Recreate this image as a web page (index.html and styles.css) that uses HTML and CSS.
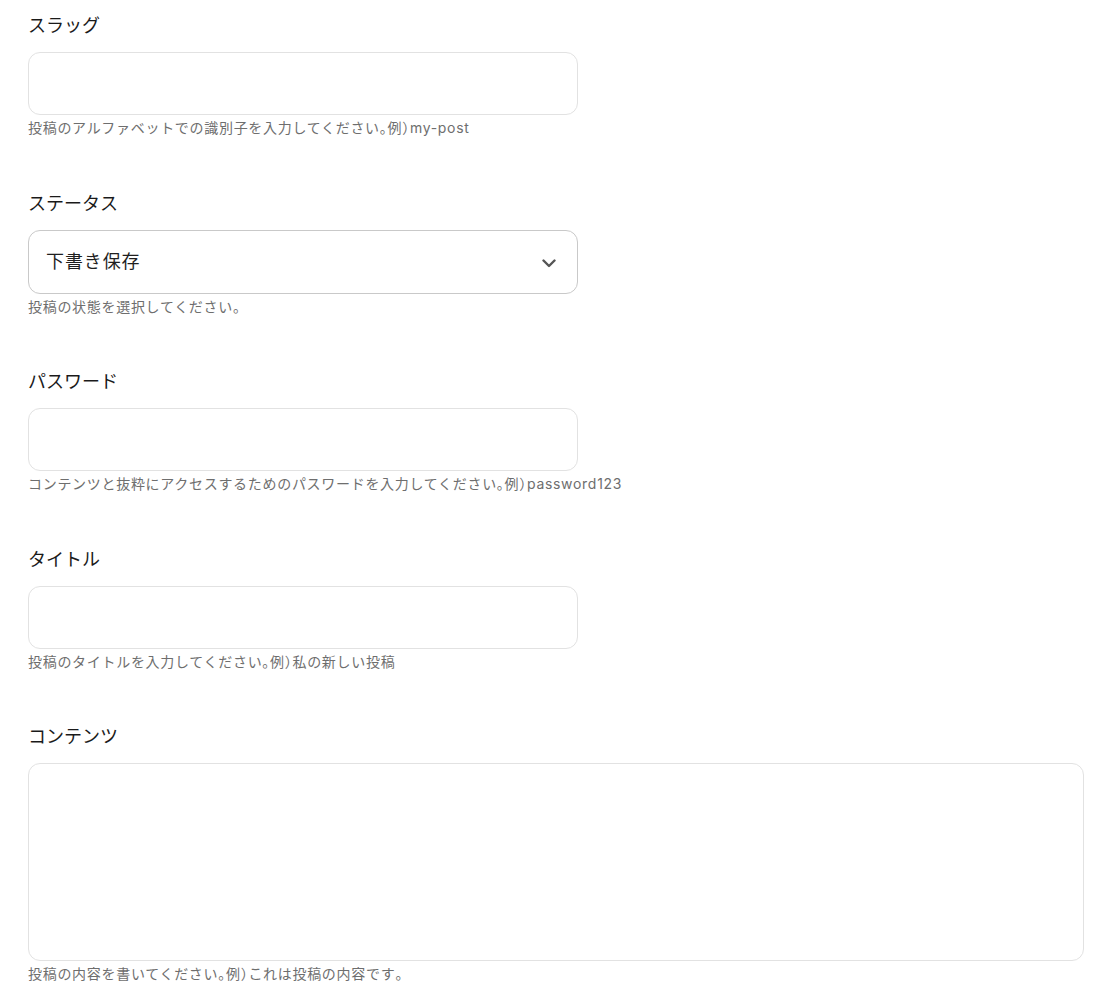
FILE: index.html
```html
<!DOCTYPE html>
<html lang="ja">
<head>
<meta charset="utf-8">
<link rel="stylesheet" href="styles.css">
</head>
<body>
<form class="form">
  <div class="field">
    <label class="label">スラッグ</label>
    <input class="input" type="text">
    <p class="help">投稿のアルファベットでの識別子を入力してください<span class="p">。</span>例<span class="p">）</span>my-post</p>
  </div>
  <div class="field">
    <label class="label">ステータス</label>
    <div class="select-wrap">
      <select class="select">
        <option>下書き保存</option>
      </select>
      <svg class="chevron" width="14" height="9" viewBox="0 0 14 9"><path d="M1.5 1.5 L7 7 L12.5 1.5" fill="none" stroke="#555" stroke-width="2.4" stroke-linecap="round" stroke-linejoin="round"/></svg>
    </div>
    <p class="help">投稿の状態を選択してください<span class="p">。</span></p>
  </div>
  <div class="field">
    <label class="label">パスワード</label>
    <input class="input" type="text">
    <p class="help">コンテンツと抜粋にアクセスするためのパスワードを入力してください<span class="p">。</span>例<span class="p">）</span>password123</p>
  </div>
  <div class="field">
    <label class="label">タイトル</label>
    <input class="input" type="text">
    <p class="help">投稿のタイトルを入力してください<span class="p">。</span>例<span class="p">）</span>私の新しい投稿</p>
  </div>
  <div class="field">
    <label class="label">コンテンツ</label>
    <textarea class="textarea"></textarea>
    <p class="help">投稿の内容を書いてください<span class="p">。</span>例<span class="p">）</span>これは投稿の内容です<span class="p">。</span></p>
  </div>
</form>
</body>
</html>
```

FILE: styles.css
```css
* { box-sizing: border-box; }
html, body { margin: 0; padding: 0; background: #fff; }
body {
  font-family: Inter, "Noto Sans CJK JP", sans-serif;
  color: #1f1f1f;
}
.form {
  padding: 12px 20px 0 28px;
  display: flex;
  flex-direction: column;
  gap: 51.5px;
}
.field {
  display: flex;
  flex-direction: column;
}
.label {
  font-size: 18px;
  line-height: 27px;
  font-weight: 400;
  margin-bottom: 13px;
  color: #1a1a1a;
}
.input, .select, .textarea {
  font-family: inherit;
  border: 1px solid #e2e2e2;
  border-radius: 12px;
  background: #fff;
  outline: none;
}
.input {
  width: 550px;
  height: 63px;
}
.select-wrap {
  position: relative;
  width: 550px;
}
.select {
  appearance: none;
  -webkit-appearance: none;
  width: 550px;
  height: 64px;
  border-color: #c9c9c9;
  padding: 0 17px;
  font-size: 18px;
  letter-spacing: 0.05em;
  color: #1f1f1f;
}
.chevron {
  position: absolute;
  right: 22px;
  top: 29px;
}
.textarea {
  width: 1056px;
  height: 198px;
  resize: none;
}
.help {
  margin: 2px 0 0;
  font-size: 14px;
  line-height: 21px;
  letter-spacing: 0.05em;
  color: #6e6e6e;
}
.p {
  font-feature-settings: "halt";
}
```
